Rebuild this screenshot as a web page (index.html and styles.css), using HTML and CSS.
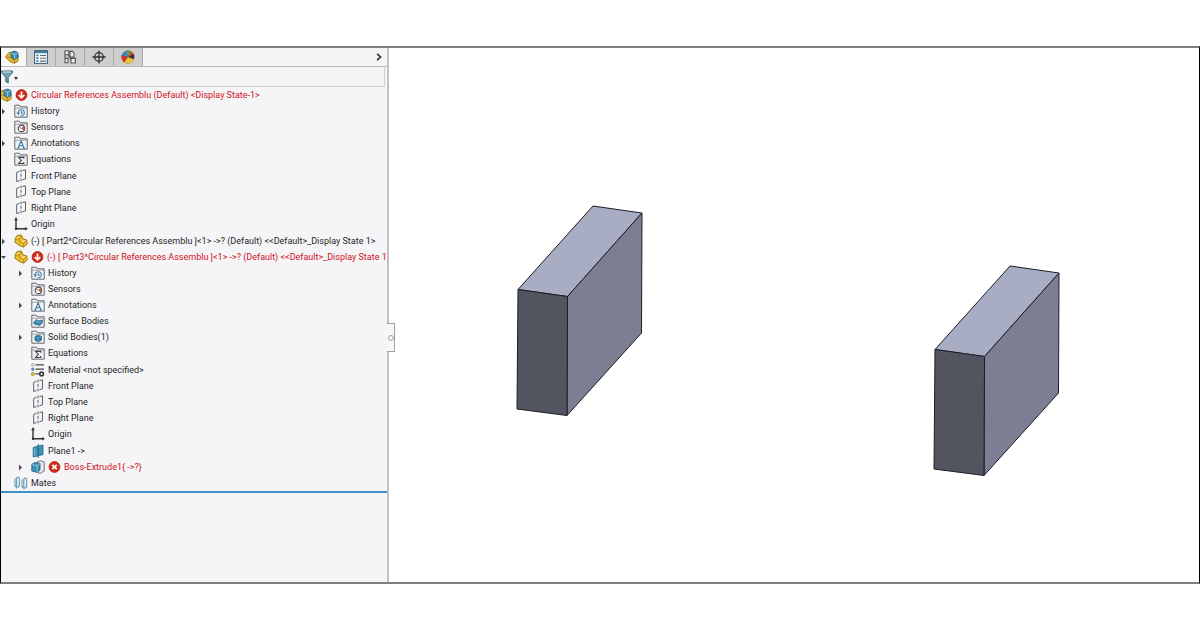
FILE: index.html
```html
<!DOCTYPE html>
<html lang="en">
<head>
  <meta charset="UTF-8">
  <meta name="viewport" content="width=device-width, initial-scale=1">
  <title>Circular References Assembly</title>
  <link rel="stylesheet" href="styles.css">
</head>
<body>
  <!-- icon sprite -->
  <svg class="sprite" aria-hidden="true">
    <symbol id="arrow-right" viewBox="0 0 5 7"><path d="M1 0.5 L4 3.5 L1 6.5 Z" fill="#4a4a4a"/></symbol>
    <symbol id="arrow-down" viewBox="0 0 5 7"><path d="M0 2 H5 L2.5 5 Z" fill="#4a4a4a"/></symbol>

    <symbol id="folder" viewBox="0 0 14 14">
      <path d="M0.8 13.2 V1.2 H5.4 L6.4 2.8 H13.2 V13.2 Z" fill="#f1f2f4" stroke="#66696e"/>
      <path d="M1 4.2 H13" stroke="#8b8e93" stroke-width="0.8"/>
    </symbol>
    <symbol id="history" viewBox="0 0 14 14">
      <use href="#folder"/>
      <path d="M4.2 9.4 A3.1 3.1 0 1 1 6.4 11.8 M7.4 7 V9.2 H9" fill="none" stroke="#4382a6" stroke-width="1.1"/>
      <path d="M2.4 8.6 H6 L4.2 11.4 Z" fill="#4382a6"/>
    </symbol>
    <symbol id="sensors" viewBox="0 0 14 14">
      <use href="#folder"/>
      <circle cx="7.4" cy="8.4" r="3.2" fill="#fff" stroke="#4d5157" stroke-width="1.2"/>
      <path d="M7.4 8.4 L9.2 6 A3 3 0 0 1 9.6 10.6 Z" fill="#d8523c"/>
      <path d="M7.2 8.8 L5.4 6.6" stroke="#35607a" stroke-width="1"/>
    </symbol>
    <symbol id="annotations" viewBox="0 0 14 14">
      <use href="#folder"/>
      <path d="M4.2 12 L7.1 5 L10 12 M5.2 9.8 H9 M3.2 12 H5.4 M8.8 12 H11" fill="none" stroke="#2f7ba3" stroke-width="1.1"/>
    </symbol>
    <symbol id="equations" viewBox="0 0 14 14">
      <use href="#folder"/>
      <path d="M9.8 6.8 V5.4 H4.6 L7.4 8.4 L4.6 11.5 H9.8 V10" fill="none" stroke="#3f4246" stroke-width="1.1"/>
    </symbol>
    <symbol id="surface" viewBox="0 0 14 14">
      <use href="#folder"/>
      <path d="M2.4 8.6 L5.4 5.6 L7.6 6.8 L11.8 6 L11 9.6 L8.2 11.6 L6 10.4 L4 10.6 Z" fill="#2f83ad" stroke="#1d5c80" stroke-width="0.6"/>
      <path d="M4.4 8.6 L6.2 7.2 L8 8.6 L10 7.6" fill="none" stroke="#8dc4de" stroke-width="0.8"/>
    </symbol>
    <symbol id="solid" viewBox="0 0 14 14">
      <use href="#folder"/>
      <path d="M4 6.4 L7.2 5.2 L10.4 6.4 V10.2 L7.2 11.8 L4 10.2 Z" fill="#2d83a9" stroke="#174e6b" stroke-width="0.7"/>
      <path d="M4.4 6.8 L7.2 7.8 L10 6.8 M7.2 7.8 V11.4" fill="none" stroke="#79b9d2" stroke-width="0.6"/>
    </symbol>
    <symbol id="material" viewBox="0 0 14 14">
      <path d="M4.5 1.8 H13 M4.5 6.2 H13 M4.5 10.8 H8" stroke="#44474b" stroke-width="1.2"/>
      <circle cx="1.8" cy="1.8" r="1.2" fill="#fff" stroke="#777" stroke-width="0.7"/>
      <circle cx="1.8" cy="6.2" r="1.3" fill="#4b9ec0" stroke="#2e6f8d" stroke-width="0.5"/>
      <circle cx="1.8" cy="11" r="1.7" fill="#d5be31" stroke="#8b7916" stroke-width="0.5"/>
      <circle cx="10.6" cy="10.9" r="1.8" fill="#fff" stroke="#34373a" stroke-width="1.6"/>
    </symbol>
    <symbol id="plane" viewBox="0 0 14 14">
      <path d="M5.5 2.2 L2.7 3.4 V12.6 L5.5 11.5 M8.4 1.6 L11.5 0.8 V9.8 L8.4 10.8" fill="none" stroke="#5d6064" stroke-width="1"/>
      <path d="M7 0.4 V14" stroke="#5d6064" stroke-width="1" stroke-dasharray="3 1.5"/>
    </symbol>
    <symbol id="plane-solid" viewBox="0 0 14 14">
      <path d="M2.2 3.4 L12 1 V10.6 L2.2 13 Z" fill="#3b93b8" stroke="#24617e" stroke-width="0.8"/>
      <path d="M7.2 0 V14" stroke="#1d5069" stroke-width="1" stroke-dasharray="3 1"/>
      <path d="M3.8 4.2 V11.6" stroke="#82c1da" stroke-width="1"/>
    </symbol>
    <symbol id="origin" viewBox="0 0 14 14">
      <path d="M2 2 V11.8 H12" fill="none" stroke="#303236" stroke-width="1.4"/>
      <path d="M0.2 3.2 L2 0 L3.8 3.2 Z M11 10 L14 11.8 L11 13.6 Z" fill="#303236"/>
      <circle cx="2" cy="11.8" r="1.2" fill="#303236"/>
    </symbol>
    <symbol id="part" viewBox="0 0 14 14">
      <path d="M1 5 L3 1.6 L7.4 1 L9.2 5 L12.6 5.8 L13.4 9.6 L9.8 13.2 L5.8 11.8 L1 8.4 Z" fill="#eabd2c" stroke="#967113" stroke-width="0.9"/>
      <path d="M1.8 5.2 L5 5 L7.2 1.8 M5 5 L6 8.2 L9.6 9.6 L12.8 6.6 M9.6 9.6 V12.6" fill="none" stroke="#a47c16" stroke-width="0.7"/>
      <path d="M3.6 2.6 L6.2 2.2 L4.6 4.2 L2.6 4.4 Z M9 6.2 L11.6 6.6 L9.4 8.6 L7 7.6 Z" fill="#f9e283"/>
    </symbol>
    <symbol id="assembly" viewBox="0 0 14 14">
      <path d="M0.6 7 L3.6 2.8 L8 1.8 L13.2 5.4 L13 11 L9.4 13.4 L4.8 11.4 Z" fill="#e8b928" stroke="#9a7413" stroke-width="0.9"/>
      <path d="M0.8 7.4 L4.6 7.2 L9.4 10 V13" fill="none" stroke="#a47c16" stroke-width="0.8"/>
      <path d="M6 2.6 L9.4 1 L13 2.6 V7.4 L9.6 9.4 L6 7.2 Z" fill="#3d8eb8" stroke="#22607f" stroke-width="0.8"/>
      <path d="M6.4 3 L9.6 4.4 L12.6 3 M9.6 4.4 V8.8" fill="none" stroke="#a9d6ea" stroke-width="0.8"/>
    </symbol>
    <symbol id="extrude" viewBox="0 0 14 14">
      <path d="M6 2 L9.4 0.8 L13.2 2 V11 L9.2 13.4 L7 12.6 Z" fill="#e7e9eb" stroke="#54585d" stroke-width="0.8"/>
      <path d="M0.8 4.4 L3.6 2.6 L9 3.4 V10 L6.2 12.4 L0.8 11 Z" fill="#3e91b5" stroke="#1e5674" stroke-width="0.8"/>
      <path d="M1 4.6 L6.2 5.6 L9 3.6 M6.2 5.6 V12" fill="none" stroke="#a7d4e5" stroke-width="0.7"/>
    </symbol>
    <symbol id="mates" viewBox="0 0 14 14">
      <path d="M1 2.6 V9 A2 2 0 0 0 5.4 9 V2.4 A1.5 1.5 0 0 0 2.6 2.4 V12.6" fill="none" stroke="#6d9db7" stroke-width="1.2"/>
      <path d="M8 3.4 V9.8 A2 2 0 0 0 12.6 9.8 V3 A1.6 1.6 0 0 0 9.8 3 V13.2" fill="none" stroke="#6d9db7" stroke-width="1.2"/>
    </symbol>

    <symbol id="error-down" viewBox="0 0 12 12">
      <circle cx="6" cy="6" r="5.4" fill="#d52a16" stroke="#a81c0e" stroke-width="0.8"/>
      <path d="M6 2.4 V8 M3.2 6 L6 8.8 L8.8 6" fill="none" stroke="#fff" stroke-width="1.7"/>
    </symbol>
    <symbol id="error-x" viewBox="0 0 12 12">
      <circle cx="6" cy="6" r="5.4" fill="#d52a16" stroke="#a81c0e" stroke-width="0.8"/>
      <path d="M3.8 3.8 L8.2 8.2 M8.2 3.8 L3.8 8.2" stroke="#fff" stroke-width="1.8"/>
    </symbol>

    <symbol id="properties" viewBox="0 0 14 14">
      <rect x="0.6" y="0.6" width="12.8" height="12.8" fill="#f4f7f9" stroke="#35617c"/>
      <rect x="1" y="1" width="12" height="2.2" fill="#3e7c9f"/>
      <path d="M2.4 5.5 H4.4 M2.4 8.3 H4.4 M2.4 11.1 H4.4" stroke="#2a6f97" stroke-width="1.5"/>
      <path d="M6 5.5 H12 M6 8.3 H12 M6 11.1 H12" stroke="#5b6b76" stroke-width="1.1"/>
    </symbol>
    <symbol id="config" viewBox="0 0 14 14">
      <path d="M2 13.2 V0.8 H5.8 V4.8 H2 M2 8.4 H5 V12.8 H2" fill="#ececec" stroke="#505356" stroke-width="1.1"/>
      <path d="M7 1.4 H9.6 L11 3 V7 H7 Z M8 8.4 H12.4 V13 H8 Z M5.4 5 L8 10" fill="#ececec" stroke="#505356" stroke-width="1.1"/>
    </symbol>
    <symbol id="target" viewBox="0 0 14 14">
      <circle cx="7" cy="7" r="4.3" fill="none" stroke="#2f3235" stroke-width="1.3"/>
      <path d="M7 0.4 V13.6 M0.4 7 H13.6" stroke="#2f3235" stroke-width="1.3"/>
    </symbol>
    <symbol id="appearance" viewBox="0 0 14 14">
      <circle cx="7" cy="7" r="6.4" fill="#3b3431"/>
      <path d="M7 7 L0.8 5.6 A6.4 6.4 0 0 1 7.6 0.6 Z" fill="#3e86c4"/>
      <path d="M7 7 L5 0.9 A6.4 6.4 0 0 1 11.6 2.6 Z" fill="#56a545"/>
      <path d="M7 7 L0.8 5.4 A6.4 6.4 0 0 0 3.8 12.6 Z" fill="#d8362b"/>
      <path d="M7 7 L3.4 12.3 A6.4 6.4 0 0 0 13 9.4 Z" fill="#efc433"/>
      <path d="M7 7 L9.6 1.2 A6.4 6.4 0 0 1 12.6 4 Z" fill="#d9402f"/>
    </symbol>
    <symbol id="funnel" viewBox="0 0 12 14">
      <path d="M0.5 1 H11.5 V2.6 L7.2 7.4 V13 L4.8 11.6 V7.4 L0.5 2.6 Z" fill="#6fa0b6" stroke="#34586b" stroke-width="0.9"/>
      <path d="M1.6 2 H10" stroke="#dbeaf1" stroke-width="1"/>
    </symbol>

    <symbol id="block" viewBox="0 0 126 211" overflow="visible">
      <g stroke="#1c1d24" stroke-linejoin="round">
        <polygon points="76,0 125,7 50.5,90.5 1,83.5" fill="#a8adc3"/>
        <polygon points="125,7 124.5,127 50,209.5 50.5,90.5" fill="#7c7f93"/>
        <polygon points="1,83.5 50.5,90.5 50,209.5 0,203" fill="#52545f"/>
      </g>
    </symbol>
  </svg>

  <main class="window">
    <aside class="panel">
      <div class="tabs">
        <button class="tab active" aria-label="Feature tree"><svg class="icon"><use href="#assembly"/></svg></button>
        <button class="tab" aria-label="Properties"><svg class="icon"><use href="#properties"/></svg></button>
        <button class="tab" aria-label="Configurations"><svg class="icon"><use href="#config"/></svg></button>
        <button class="tab" aria-label="Dimensions"><svg class="icon"><use href="#target"/></svg></button>
        <button class="tab" aria-label="Appearances"><svg class="icon"><use href="#appearance"/></svg></button>
        <button class="more" aria-label="More tabs">
          <svg viewBox="0 0 6 8"><path d="M1 0.8 L4.6 4 L1 7.2" fill="none" stroke="#2d2d2d" stroke-width="1.6"/></svg>
        </button>
      </div>

      <div class="filter">
        <label for="filter-text" aria-label="Filter">
          <svg class="funnel"><use href="#funnel"/></svg>
          <svg class="caret" viewBox="0 0 4 3"><path d="M0 0 H4 L2 3 Z" fill="#333"/></svg>
        </label>
        <input id="filter-text" type="text">
      </div>

      <ul class="tree">
        <li class="row root error"><svg class="icon"><use href="#assembly"/></svg><svg class="badge"><use href="#error-down"/></svg><span>Circular References Assemblu (Default) &lt;Display State-1&gt;</span></li>
        <li class="row"><button class="toggle" aria-label="Expand"><svg><use href="#arrow-right"/></svg></button><svg class="icon"><use href="#history"/></svg><span>History</span></li>
        <li class="row leaf"><svg class="icon"><use href="#sensors"/></svg><span>Sensors</span></li>
        <li class="row"><button class="toggle" aria-label="Expand"><svg><use href="#arrow-right"/></svg></button><svg class="icon"><use href="#annotations"/></svg><span>Annotations</span></li>
        <li class="row leaf group-end"><svg class="icon"><use href="#equations"/></svg><span>Equations</span></li>
        <li class="row leaf"><svg class="icon"><use href="#plane"/></svg><span>Front Plane</span></li>
        <li class="row leaf"><svg class="icon"><use href="#plane"/></svg><span>Top Plane</span></li>
        <li class="row leaf"><svg class="icon"><use href="#plane"/></svg><span>Right Plane</span></li>
        <li class="row leaf group-end"><svg class="icon"><use href="#origin"/></svg><span>Origin</span></li>
        <li class="row"><button class="toggle" aria-label="Expand"><svg><use href="#arrow-right"/></svg></button><svg class="icon"><use href="#part"/></svg><span>(-) [ Part2^Circular References Assemblu ]&lt;1&gt; -&gt;? (Default) &lt;&lt;Default&gt;_Display State 1&gt;</span></li>
        <li>
          <div class="row error"><button class="toggle" aria-label="Collapse"><svg><use href="#arrow-down"/></svg></button><svg class="icon"><use href="#part"/></svg><svg class="badge"><use href="#error-down"/></svg><span>(-) [ Part3^Circular References Assemblu ]&lt;1&gt; -&gt;? (Default) &lt;&lt;Default&gt;_Display State 1</span></div>
          <ul class="children">
            <li class="row"><button class="toggle" aria-label="Expand"><svg><use href="#arrow-right"/></svg></button><svg class="icon"><use href="#history"/></svg><span>History</span></li>
            <li class="row leaf"><svg class="icon"><use href="#sensors"/></svg><span>Sensors</span></li>
            <li class="row"><button class="toggle" aria-label="Expand"><svg><use href="#arrow-right"/></svg></button><svg class="icon"><use href="#annotations"/></svg><span>Annotations</span></li>
            <li class="row leaf"><svg class="icon"><use href="#surface"/></svg><span>Surface Bodies</span></li>
            <li class="row"><button class="toggle" aria-label="Expand"><svg><use href="#arrow-right"/></svg></button><svg class="icon"><use href="#solid"/></svg><span>Solid Bodies(1)</span></li>
            <li class="row leaf group-end"><svg class="icon"><use href="#equations"/></svg><span>Equations</span></li>
            <li class="row leaf"><svg class="icon"><use href="#material"/></svg><span>Material &lt;not specified&gt;</span></li>
            <li class="row leaf"><svg class="icon"><use href="#plane"/></svg><span>Front Plane</span></li>
            <li class="row leaf"><svg class="icon"><use href="#plane"/></svg><span>Top Plane</span></li>
            <li class="row leaf"><svg class="icon"><use href="#plane"/></svg><span>Right Plane</span></li>
            <li class="row leaf group-end"><svg class="icon"><use href="#origin"/></svg><span>Origin</span></li>
            <li class="row leaf"><svg class="icon"><use href="#plane-solid"/></svg><span>Plane1 -&gt;</span></li>
            <li class="row error"><button class="toggle" aria-label="Expand"><svg><use href="#arrow-right"/></svg></button><svg class="icon"><use href="#extrude"/></svg><svg class="badge"><use href="#error-x"/></svg><span>Boss-Extrude1{ -&gt;?}</span></li>
          </ul>
        </li>
        <li class="row leaf"><svg class="icon"><use href="#mates"/></svg><span>Mates</span></li>
      </ul>
      <button class="splitter" aria-label="Collapse panel"></button>
    </aside>

    <section class="viewport">
      <svg class="scene" viewBox="0 0 810 534" role="img" aria-label="Two extruded blocks">
        <use href="#block" x="128" y="158" width="126" height="211"/>
        <use href="#block" x="545" y="218" width="126" height="211"/>
      </svg>
    </section>
  </main>
</body>
</html>
```
FILE: styles.css
```css
* {
  box-sizing: border-box;
}
body {
  margin: 0;
  padding: 46px 0;
  height: 100vh;
  display: flex;
  background-color: white;
  color: #1f1f1f;
  font-family: Roboto, 'Noto Sans', sans-serif;
  font-size: 9px;
}
button {
  padding: 0;
  border: none;
  background: none;
  cursor: pointer;
}
svg {
  display: block;
  flex: none;
}
ul {
  list-style: none;
  margin: 0;
  padding: 0;
}
.sprite {
  position: absolute;
  width: 0;
  height: 0;
}
.window {
  flex: 1;
  display: flex;
  border: 1px solid black;
  border-top: 2px solid #7f7f7f;
  border-bottom: 2px solid #7f7f7f;
}

/* left panel */
.panel {
  position: relative;
  flex: none;
  width: 388px;
  background-color: #f5f5f7;
  border-right: 2px solid #c2c2c4;
}
.tabs {
  display: flex;
  height: 19px;
  border-bottom: 1px solid #bcbcbc;
}
.tab {
  display: flex;
  align-items: center;
  justify-content: center;
  width: 29px;
  background-color: #cecece;
  border-right: 1px solid #a8a8a8;
}
.tab.active {
  width: 26px;
  padding-right: 4px;
  background-color: #f7f7f7;
}
.more {
  margin-left: auto;
  margin-right: 5px;
}
.more svg {
  width: 6px;
  height: 8px;
}
.icon {
  width: 14px;
  height: 14px;
}
.filter {
  display: flex;
  height: 20px;
  padding-right: 2px;
}
.filter label {
  display: flex;
  align-items: center;
  gap: 1px;
  width: 18px;
  border-bottom: 1px solid #d4d4d6;
}
.funnel {
  width: 12px;
  height: 14px;
}
.caret {
  width: 4px;
  height: 3px;
  margin-top: 4px;
}
.filter input {
  flex: 1;
  padding: 0 4px;
  border: 1px solid #cfcfd1;
  border-width: 0 1px 1px 0;
  background: none;
  font: inherit;
}

/* feature tree */
.tree {
  border-bottom: 2px solid #3f8fc4;
  overflow: hidden;
}
.row {
  display: flex;
  align-items: center;
  gap: 3px;
  height: 16px;
  line-height: 16px;
  white-space: nowrap;
}
.row.leaf {
  padding-left: 13px;
}
.row.group-end {
  margin-bottom: 1px;
}
.root .icon {
  margin-left: -3px;
}
.toggle {
  flex: none;
  width: 13px;
  height: 14px;
  margin-right: -3px;
}
.toggle svg {
  width: 5px;
  height: 7px;
}
.badge {
  width: 13px;
  height: 12px;
}
.children {
  padding-left: 17px;
}
.error {
  color: #d0101c;
}
.splitter {
  position: absolute;
  top: 275px;
  right: -8px;
  width: 8px;
  height: 29px;
  background-color: #f7f7f8;
  border: 1px solid #a0a0a2;
  border-left: none;
}
.splitter::before {
  content: '';
  display: block;
  width: 4px;
  height: 4px;
  margin-left: 1px;
  border: 1px solid #a0a0a2;
  border-radius: 50%;
}

/* model view */
.viewport {
  flex: 1;
  min-width: 0;
}
.scene {
  width: 100%;
  height: 100%;
}
```
